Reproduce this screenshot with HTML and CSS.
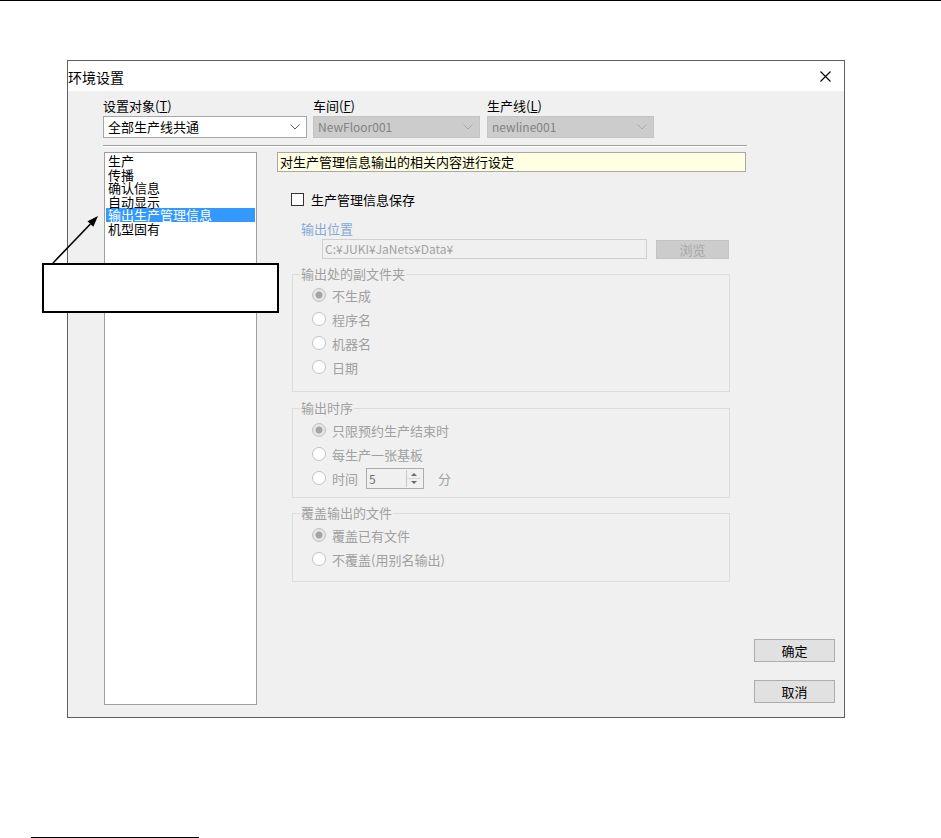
FILE: index.html
```html
<!DOCTYPE html>
<html lang="zh-CN">
<head>
    <meta charset="UTF-8">
    <title>环境设置</title>
    <link rel="stylesheet" href="styles.css">
</head>
<body>
<div class="page">
    <div class="rule-top"></div>

    <!-- 对话框 -->
    <div class="dialog">
        <div class="titlebar">
            <span class="title">环境设置</span>
            <svg class="close" width="11" height="11" viewBox="0 0 11 11">
                <path d="M0.5 0.5 L10.5 10.5 M10.5 0.5 L0.5 10.5" stroke="#000" stroke-width="1.1" fill="none"/>
            </svg>
        </div>

        <div class="dlg-body">
            <div class="targets">
                <div class="field w1">
                    <label>设置对象(<u>T</u>)</label>
                    <div class="combo">全部生产线共通
                        <svg class="chev" width="10" height="6" viewBox="0 0 10 6"><path d="M0.5 0.5 L5 5 L9.5 0.5" stroke="#606060" fill="none"/></svg>
                    </div>
                </div>
                <div class="field w2">
                    <label>车间(<u>F</u>)</label>
                    <div class="combo off latin">NewFloor001
                        <svg class="chev" width="10" height="6" viewBox="0 0 10 6"><path d="M0.5 0.5 L5 5 L9.5 0.5" stroke="#a8a8a8" fill="none"/></svg>
                    </div>
                </div>
                <div class="field w3">
                    <label>生产线(<u>L</u>)</label>
                    <div class="combo off latin">newline001
                        <svg class="chev" width="10" height="6" viewBox="0 0 10 6"><path d="M0.5 0.5 L5 5 L9.5 0.5" stroke="#a8a8a8" fill="none"/></svg>
                    </div>
                </div>
            </div>

            <div class="sep"></div>

            <div class="main">
                <ul class="listbox">
                    <li>生产</li>
                    <li>传播</li>
                    <li>确认信息</li>
                    <li>自动显示</li>
                    <li class="sel">输出生产管理信息</li>
                    <li>机型固有</li>
                </ul>

                <div class="panel">
                    <div class="hint">对生产管理信息输出的相关内容进行设定</div>

                    <div class="chk-row">
                        <span class="chk"></span>
                        <span>生产管理信息保存</span>
                    </div>

                    <div class="addr-label">输出位置</div>
                    <div class="path-row">
                        <div class="path latin">C:¥JUKI¥JaNets¥Data¥</div>
                        <div class="browse">浏览</div>
                    </div>

                    <fieldset class="group g1">
                        <legend>输出处的副文件夹</legend>
                        <div class="opt"><span class="radio on"></span><span>不生成</span></div>
                        <div class="opt"><span class="radio"></span><span>程序名</span></div>
                        <div class="opt"><span class="radio"></span><span>机器名</span></div>
                        <div class="opt"><span class="radio"></span><span>日期</span></div>
                    </fieldset>

                    <fieldset class="group g2">
                        <legend>输出时序</legend>
                        <div class="opt"><span class="radio on"></span><span>只限预约生产结束时</span></div>
                        <div class="opt"><span class="radio"></span><span>每生产一张基板</span></div>
                        <div class="opt">
                            <span class="radio"></span><span>时间</span>
                            <div class="spin">
                                <span class="spin-val latin">5</span>
                                <svg class="spin-btn" width="15" height="17" viewBox="0 0 15 17">
                                    <path d="M0.5 0 V17" stroke="#c8c8c8"/>
                                    <path d="M1 8.5 H15" stroke="#dadada"/>
                                    <path d="M5 6 L8 3 L11 6 Z" fill="#6a6a6a"/>
                                    <path d="M5 11 L8 14 L11 11 Z" fill="#6a6a6a"/>
                                </svg>
                            </div>
                            <span class="unit">分</span>
                        </div>
                    </fieldset>

                    <fieldset class="group g3">
                        <legend>覆盖输出的文件</legend>
                        <div class="opt"><span class="radio on"></span><span>覆盖已有文件</span></div>
                        <div class="opt"><span class="radio"></span><span>不覆盖(用别名输出)</span></div>
                    </fieldset>
                </div>

                <div class="actions">
                    <button>确定</button>
                    <button>取消</button>
                </div>
            </div>
        </div>
    </div>

    <div class="footnote-rule"></div>

    <!-- 标注 -->
    <div class="callout"></div>
    <svg class="arrow" width="70" height="70" viewBox="0 0 70 70">
        <path d="M13 63 L50.4 23.95" stroke="#000" stroke-width="1.6" fill="none"/>
        <path d="M58 16 L53.3 26.7 L47.5 21.2 Z" fill="#000"/>
    </svg>
</div>
</body>
</html>
```

FILE: styles.css
```css
body {
    margin: 0;
    font-family: "Noto Sans CJK SC", "Noto Sans", sans-serif;
    font-size: 13px;
    color: #000;
    background: #fff;
}
.page {
    position: relative;
    width: 941px;
    height: 838px;
    overflow: hidden;
}
.latin {
    font-size: 12px;
}
.rule-top {
    height: 1px;
    background: #000;
}

/* 对话框 */
.dialog {
    box-sizing: border-box;
    width: 778px;
    height: 658px;
    margin: 59px 0 0 67px;
    border: 1px solid #5f5f5f;
    background: #f0f0f0;
}
.titlebar {
    height: 30px;
    background: #fff;
    display: flex;
    align-items: center;
}
.title {
    font-size: 14px;
    line-height: 16px;
    padding-top: 1px;
}
.close {
    margin-left: auto;
    margin-right: 13px;
}
.dlg-body {
    padding: 7px 0 0 35px;
}
.targets {
    display: flex;
}
.field label {
    display: block;
    height: 16px;
    line-height: 16px;
    margin-bottom: 2px;
}
.w1 { width: 204px; margin-right: 6px; }
.w2 { width: 167px; margin-right: 7px; }
.w3 { width: 167px; }
.combo {
    box-sizing: border-box;
    height: 22px;
    border: 1px solid #a6a6a6;
    background: #fff;
    padding-left: 4px;
    line-height: 20px;
    display: flex;
    align-items: center;
}
.combo.off {
    background: #cccccc;
    border-color: #c4c4c4;
    color: #838383;
}
.chev {
    margin-left: auto;
    margin-right: 6px;
}
.sep {
    width: 644px;
    margin-top: 7px;
    border-top: 1px solid #a0a0a0;
    border-bottom: 1px solid #fff;
}

.main {
    display: flex;
    margin-top: 5px;
    height: 553px;
}
.listbox {
    box-sizing: border-box;
    list-style: none;
    margin: 0 0 0 1px;
    width: 153px;
    height: 553px;
    padding: 1px;
    border: 1px solid #a0a0a0;
    background: #fff;
}
.listbox li {
    line-height: 13.5px;
    height: 13.5px;
    padding-left: 2px;
    white-space: nowrap;
}
.listbox li.sel {
    background: #3399ff;
    color: #fff;
}

/* 右侧设定区 */
.panel {
    width: 469px;
    margin-left: 20px;
}
.hint {
    box-sizing: border-box;
    height: 20px;
    line-height: 18px;
    padding-left: 2px;
    border: 1px solid #a8a8a8;
    background: #ffffe1;
}
.chk-row {
    display: flex;
    align-items: center;
    height: 13px;
    margin-top: 21px;
    padding-left: 14px;
}
.chk {
    box-sizing: border-box;
    width: 13px;
    height: 13px;
    border: 1px solid #333;
    background: #fff;
    margin-right: 7px;
}
.addr-label {
    margin-top: 14px;
    height: 18px;
    line-height: 18px;
    padding-left: 24px;
    color: #86a8d4;
}
.path-row {
    display: flex;
    margin-top: 1px;
    padding-left: 45px;
    height: 20px;
}
.path {
    box-sizing: border-box;
    width: 325px;
    height: 20px;
    line-height: 18px;
    padding-left: 2px;
    border: 1px solid #cfcfcf;
    color: #a3a3a3;
}
.browse {
    box-sizing: border-box;
    width: 73px;
    height: 19px;
    margin: 1px 0 0 9px;
    line-height: 17px;
    text-align: center;
    background: #cccccc;
    border: 1px solid #c4c4c4;
    color: #a8a8a8;
}

.group {
    box-sizing: border-box;
    width: 438px;
    margin: 7px 0 0 15px;
    padding: 0 0 12px 7px;
    border: 1px solid #dcdcdc;
    color: #a0a0a0;
}
.group legend {
    padding: 0 1px;
    line-height: 16px;
    height: 16px;
}
.g1 { padding-top: 1px; padding-bottom: 12px; }
.g2 { margin-top: 8px; padding-top: 2px; padding-bottom: 7px; }
.g3 { margin-top: 7px; padding-top: 2px; padding-bottom: 10px; }
.opt {
    display: flex;
    align-items: center;
    height: 24px;
    padding-left: 12px;
}
.radio {
    box-sizing: border-box;
    width: 14px;
    height: 14px;
    border-radius: 50%;
    border: 1px solid #c2c2c2;
    background: #fff;
    margin-right: 6px;
}
.radio.on {
    background: radial-gradient(circle, #a4a4a4 0 3.2px, #e4e4e4 3.8px);
}
.spin {
    box-sizing: border-box;
    display: flex;
    align-items: center;
    width: 58px;
    height: 21px;
    margin-left: 8px;
    border: 1px solid #adadad;
    background: #f0f0f0;
}
.spin-val {
    padding-left: 2px;
    color: #707070;
}
.spin-btn {
    margin-left: auto;
    margin-right: 2px;
}
.unit {
    margin-left: 14px;
}

.actions {
    display: flex;
    flex-direction: column;
    justify-content: flex-end;
    gap: 18px;
    margin-left: 8px;
    padding-bottom: 2px;
}
.actions button {
    width: 81px;
    height: 23px;
    padding: 0;
    font-family: inherit;
    font-size: 13px;
    background: #e1e1e1;
    border: 1px solid #adadad;
    color: #000;
}

.footnote-rule {
    width: 168px;
    margin: 119px 0 0 31px;
    border-top: 1px solid #000;
}

/* 标注框和箭头 */
.callout {
    position: absolute;
    left: 42px;
    top: 263px;
    box-sizing: border-box;
    width: 237px;
    height: 50px;
    border: 2px solid #000;
    background: #fff;
}
.arrow {
    position: absolute;
    left: 40px;
    top: 200px;
}
```
